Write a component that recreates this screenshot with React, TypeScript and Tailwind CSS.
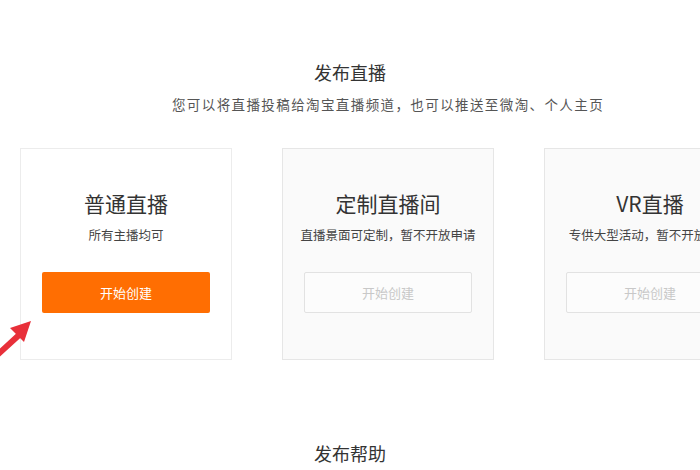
import React from 'react';

interface LiveOption {
  title: string;
  desc: string;
  enabled: boolean;
}

const OPTIONS: LiveOption[] = [
  { title: '普通直播', desc: '所有主播均可', enabled: true },
  { title: '定制直播间', desc: '直播景面可定制，暂不开放申请', enabled: false },
  { title: 'VR直播', desc: '专供大型活动，暂不开放申请', enabled: false },
];

const FONT = { fontFamily: '"Noto Sans CJK SC", "Liberation Sans", sans-serif' };

const OptionCard: React.FC<{ option: LiveOption }> = ({ option }) => (
  <div
    className={`shrink-0 w-[212px] h-[212px] border flex flex-col items-center pt-[40px] px-[21px] ${
      option.enabled ? 'bg-white border-[#ececec]' : 'bg-[#fafafa] border-[#e6e6e6]'
    }`}
  >
    <h2 className="text-[21px] leading-[28px] text-[#333]">{option.title}</h2>
    <p className="mt-[9px] text-[12.5px] leading-[18px] text-[#444] whitespace-nowrap">{option.desc}</p>
    {option.enabled ? (
      <button className="mt-[28px] w-full h-[41px] bg-[#ff6e02] text-white text-[13px] rounded-[2px]">
        开始创建
      </button>
    ) : (
      <button className="mt-[28px] w-full h-[41px] bg-[#fcfcfc] border border-[#e2e2e2] text-[#c8c8c8] text-[13px] rounded-[2px]">
        开始创建
      </button>
    )}
  </div>
);

export default function App() {
  return (
    <div className="relative w-[700px] h-[470px] overflow-hidden bg-white" style={FONT}>
      {/* Header */}
      <div className="flex flex-col items-center pt-[60px]">
        <h1 className="text-[18px] leading-[24px] text-[#333]">发布直播</h1>
        <p className="mt-[11px] ml-[76px] text-[13.5px] leading-[18px] tracking-[1.4px] text-[#555]">
          您可以将直播投稿给淘宝直播频道，也可以推送至微淘、个人主页
        </p>
      </div>

      {/* Cards */}
      <div className="flex gap-[50px] pl-[20px] mt-[35px]">
        {OPTIONS.map((o) => (
          <OptionCard key={o.title} option={o} />
        ))}
      </div>

      {/* Help */}
      <div className="flex justify-center mt-[81px]">
        <h2 className="text-[18px] leading-[24px] text-[#333]">发布帮助</h2>
      </div>

      {/* Red annotation arrow */}
      <svg className="absolute left-0 top-[312px]" width="44" height="48" viewBox="0 0 44 48">
        <path d="M-6 46 L18 24" stroke="#e8303a" strokeWidth="6" strokeLinecap="round" />
        <path d="M31 9 L10 16 L24 30 Z" fill="#e8303a" />
      </svg>
    </div>
  );
}
